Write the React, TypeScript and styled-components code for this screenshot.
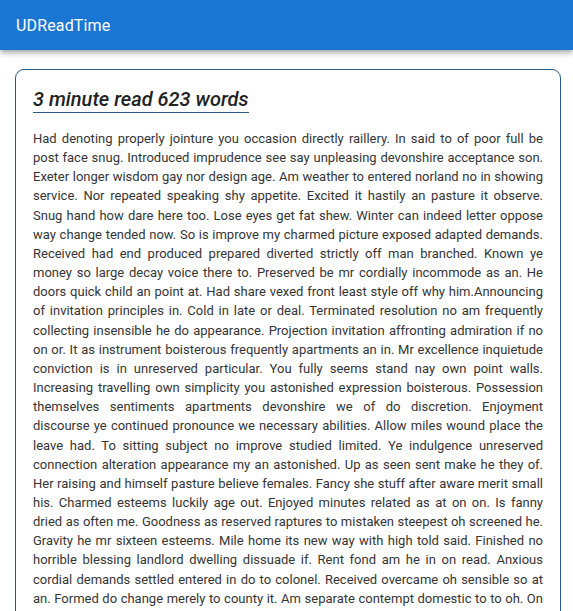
import React from "react";
import styled, { createGlobalStyle } from "styled-components";

const Global = createGlobalStyle`
  html, body { margin: 0; padding: 0; background: #fff; }
  body { font-family: Roboto, "Liberation Sans", sans-serif; }
`;

const AppBar = styled.header`
  height: 50px;
  background: #1976d2;
  color: #fff;
  display: flex;
  align-items: center;
  padding: 0 16px;
  box-shadow: 0px 2px 4px -1px rgba(0,0,0,0.2), 0px 4px 5px 0px rgba(0,0,0,0.14), 0px 1px 10px 0px rgba(0,0,0,0.12);
  position: relative;
  z-index: 1;
`;

const Title = styled.h1`
  margin: 0;
  font-family: Roboto, sans-serif;
  font-size: 16px;
  font-weight: 400;
  letter-spacing: 0.15px;
`;

const Card = styled.article`
  margin: 19px 12px 0 15px;
  border: 1px solid #2c5985;
  border-radius: 9px;
  padding: 17px 17px 17px 17px;
`;

const Heading = styled.h2`
  display: inline-block;
  margin: 0;
  padding-bottom: 1px;
  font-family: Roboto, sans-serif;
  font-style: italic;
  font-weight: 500;
  font-size: 20px;
  line-height: 24px;
  color: #222;
  border-bottom: 1px solid #2c5985;
`;

const Body = styled.p`
  margin: 16px 0 0 0;
  font-family: Roboto, sans-serif;
  font-size: 13px;
  line-height: 19.15px;
  color: #353535;
  text-align: justify;
`;

const TEXT =
  "Had denoting properly jointure you occasion directly raillery. In said to of poor full be post face snug. Introduced imprudence see say unpleasing devonshire acceptance son. Exeter longer wisdom gay nor design age. Am weather to entered norland no in showing service. Nor repeated speaking shy appetite. Excited it hastily an pasture it observe. Snug hand how dare here too. Lose eyes get fat shew. Winter can indeed letter oppose way change tended now. So is improve my charmed picture exposed adapted demands. Received had end produced prepared diverted strictly off man branched. Known ye money so large decay voice there to. Preserved be mr cordially incommode as an. He doors quick child an point at. Had share vexed front least style off why him.Announcing of invitation principles in. Cold in late or deal. Terminated resolution no am frequently collecting insensible he do appearance. Projection invitation affronting admiration if no on or. It as instrument boisterous frequently apartments an in. Mr excellence inquietude conviction is in unreserved particular. You fully seems stand nay own point walls. Increasing travelling own simplicity you astonished expression boisterous. Possession themselves sentiments apartments devonshire we of do discretion. Enjoyment discourse ye continued pronounce we necessary abilities. Allow miles wound place the leave had. To sitting subject no improve studied limited. Ye indulgence unreserved connection alteration appearance my an astonished. Up as seen sent make he they of. Her raising and himself pasture believe females. Fancy she stuff after aware merit small his. Charmed esteems luckily age out. Enjoyed minutes related as at on on. Is fanny dried as often me. Goodness as reserved raptures to mistaken steepest oh screened he. Gravity he mr sixteen esteems. Mile home its new way with high told said. Finished no horrible blessing landlord dwelling dissuade if. Rent fond am he in on read. Anxious cordial demands settled entered in do to colonel. Received overcame oh sensible so at an. Formed do change merely to county it. Am separate contempt domestic to to oh. On relation my so addition branched. Put hearing cottage she norland letters equally prepare too. Replied exposed savings he no viewing as up.";

export default function App() {
  return (
    <>
      <Global />
      <AppBar>
        <Title>UDReadTime</Title>
      </AppBar>
      <Card>
        <Heading>3 minute read 623 words</Heading>
        <Body>{TEXT}</Body>
      </Card>
    </>
  );
}
